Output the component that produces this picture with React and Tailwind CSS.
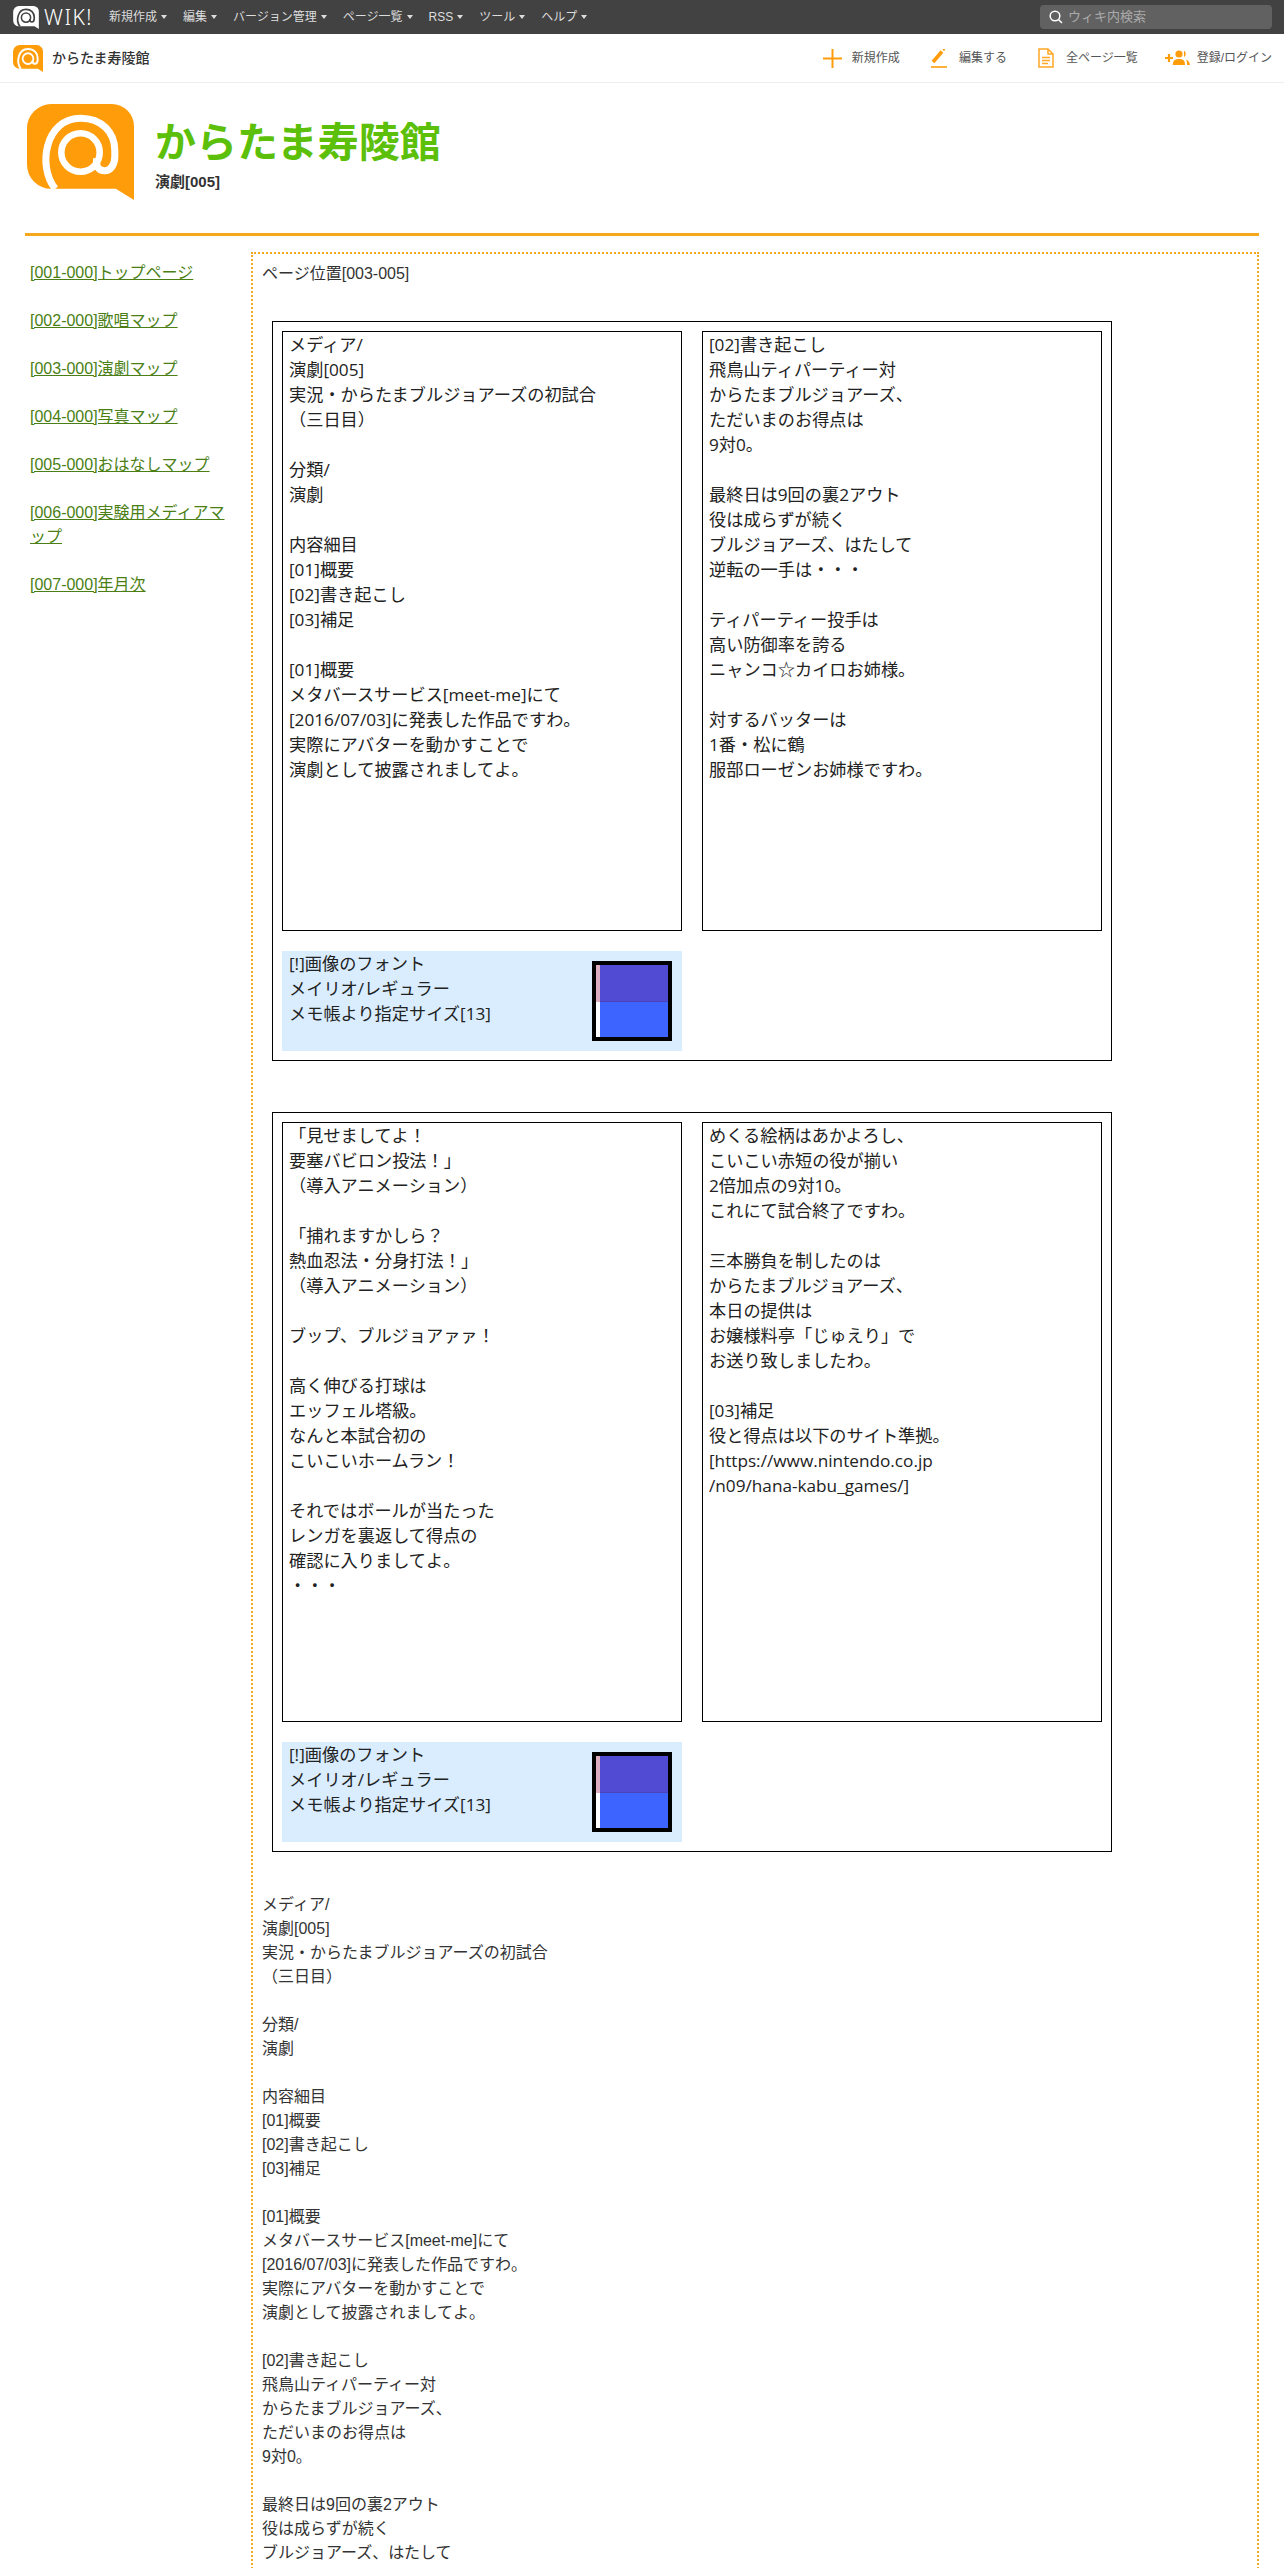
const SANS = { fontFamily: '"Liberation Sans", "Noto Sans CJK JP", sans-serif' }
const PIC = { fontFamily: '"Open Sans", "Noto Sans CJK JP", sans-serif' }

const menu = ['新規作成', '編集', 'バージョン管理', 'ページ一覧', 'RSS', 'ツール', 'ヘルプ']

const sideLinks = [
  '[001-000]トップページ',
  '[002-000]歌唱マップ',
  '[003-000]演劇マップ',
  '[004-000]写真マップ',
  '[005-000]おはなしマップ',
  '[006-000]実験用メディアマップ',
  '[007-000]年月次',
]

const col1 = [
  'メディア/', '演劇[005]', '実況・からたまブルジョアーズの初試合', '（三日目）', '',
  '分類/', '演劇', '',
  '内容細目', '[01]概要', '[02]書き起こし', '[03]補足', '',
  '[01]概要', 'メタバースサービス[meet-me]にて', '[2016/07/03]に発表した作品ですわ。', '実際にアバターを動かすことで', '演劇として披露されましてよ。',
]
const col2 = [
  '[02]書き起こし', '飛鳥山ティパーティー対', 'からたまブルジョアーズ、', 'ただいまのお得点は', '9対0。', '',
  '最終日は9回の裏2アウト', '役は成らずが続く', 'ブルジョアーズ、はたして', '逆転の一手は・・・', '',
  'ティパーティー投手は', '高い防御率を誇る', 'ニャンコ☆カイロお姉様。', '',
  '対するバッターは', '1番・松に鶴', '服部ローゼンお姉様ですわ。',
]
const col3 = [
  '「見せましてよ！', '要塞バビロン投法！」', '（導入アニメーション）', '',
  '「捕れますかしら？', '熱血忍法・分身打法！」', '（導入アニメーション）', '',
  'ブップ、ブルジョアァァ！', '',
  '高く伸びる打球は', 'エッフェル塔級。', 'なんと本試合初の', 'こいこいホームラン！', '',
  'それではボールが当たった', 'レンガを裏返して得点の', '確認に入りましてよ。', '・・・',
]
const col4 = [
  'めくる絵柄はあかよろし、', 'こいこい赤短の役が揃い', '2倍加点の9対10。', 'これにて試合終了ですわ。', '',
  '三本勝負を制したのは', 'からたまブルジョアーズ、', '本日の提供は', 'お嬢様料亭「じゅえり」で', 'お送り致しましたわ。', '',
  '[03]補足', '役と得点は以下のサイト準拠。', '[https://www.nintendo.co.jp', '/n09/hana-kabu_games/]',
]

function Bubble({ className, fill, stroke }) {
  return (
    <svg viewBox="0 0 106 95" className={className}>
      <path d="M24 0H84A22 22 0 0 1 106 22V95L88 84H24A24 24 0 0 1 0 60V24A24 24 0 0 1 24 0Z" fill={fill} />
      <path
        d="M28 84C10 62 18 14 53 14C74 14 87 28 87 46V52C87 60 83 66 77 66C71 66 68 62 69 54"
        fill="none"
        stroke={stroke}
        strokeWidth="7"
      />
      <circle cx="53" cy="48" r="19" fill="none" stroke={stroke} strokeWidth="6.5" />
    </svg>
  )
}

function Lines({ lines }) {
  return lines.map((line, i) => <div key={i}>{line || '\u00a0'}</div>)
}

function PicBox({ lines }) {
  return (
    <div className="h-[600px] border border-black pl-[6px] text-[17.2px] leading-[25px] text-[#222]">
      <Lines lines={lines} />
    </div>
  )
}

function FontNote() {
  return (
    <div className="flex h-[100px] items-center justify-between bg-[#d9edff] pl-[7px] pr-[10px] text-[17.2px] leading-[25px] text-[#222]">
      <div className="self-start">
        <div>[!]画像のフォント</div>
        <div>メイリオ/レギュラー</div>
        <div>メモ帳より指定サイズ[13]</div>
      </div>
      <div className="flex h-20 w-20 border-4 border-black">
        <div className="w-1">
          <div className="h-[37px] bg-[#dcaec0]" />
          <div className="h-[35px] bg-white" />
        </div>
        <div className="flex-1">
          <div className="h-[37px] border-b border-[#4a44b8] bg-[#514bd4]" />
          <div className="h-[35px] bg-[#3e64ff]" />
        </div>
      </div>
    </div>
  )
}

function Picture({ left, right }) {
  return (
    <div className="ml-[10px] w-[840px] border border-black p-[9px]" style={PIC}>
      <div className="grid grid-cols-2 gap-x-5 gap-y-5">
        <PicBox lines={left} />
        <PicBox lines={right} />
        <FontNote />
      </div>
    </div>
  )
}

function ActionLink({ icon, label, className }) {
  return (
    <a className={`flex items-center ${className}`}>
      {icon}
      <span>{label}</span>
    </a>
  )
}

export default function App() {
  return (
    <div className="h-[2568px] overflow-hidden bg-white text-[#333]" style={SANS}>
      {/* top bar */}
      <div className="flex h-[34px] items-center justify-between bg-[#424242] pl-[13px] pr-3">
        <div className="flex items-center">
          <Bubble className="h-[23px] w-[26px]" fill="#fff" stroke="#424242" />
          <span
            className="ml-[5px] w-[52px] text-[21px] leading-[34px] font-light tracking-[1.5px] text-white"
            style={{ fontFamily: '"Noto Sans", sans-serif' }}
          >
            WIK!
          </span>
          <div className="ml-[13px] flex gap-4 text-xs text-[#ddd]">
            {menu.map((m) => (
              <span key={m} className="flex items-center">
                {m}
                <span className="ml-1 h-0 w-0 border-x-[3px] border-t-[4px] border-x-transparent border-t-[#ddd]" />
              </span>
            ))}
          </div>
        </div>
        <div className="flex h-6 w-[232px] items-center rounded-sm bg-[#616161] pl-[9px]">
          <svg viewBox="0 0 14 14" className="h-[14px] w-[14px]" fill="none" stroke="#fff" strokeWidth="1.5">
            <circle cx="6" cy="6" r="4.8" />
            <path d="M9.5 9.5L13 13" />
          </svg>
          <span className="ml-[5px] text-[13px] text-[#aaa]">ウィキ内検索</span>
        </div>
      </div>

      {/* wiki bar */}
      <div className="flex h-[49px] items-center justify-between border-b border-[#eee] pl-[13px] pr-3 text-xs text-[#555]">
        <div className="flex items-center">
          <Bubble className="h-[27px] w-[30px]" fill="#ff9c0a" stroke="#fff" />
          <span className="ml-[9px] text-sm font-medium text-[#333]">からたま寿陵館</span>
        </div>
        <div className="flex items-center">
          <ActionLink
            label="新規作成"
            className="mr-[31px]"
            icon={
              <svg viewBox="0 0 19 19" className="mr-[10px] h-[19px] w-[19px]" stroke="#ff9c0a" strokeWidth="2">
                <path d="M0 9.5H19M9.5 0V19" />
              </svg>
            }
          />
          <ActionLink
            label="編集する"
            className="mr-[31px]"
            icon={
              <svg viewBox="0 0 16 19" className="mr-3 h-[19px] w-4" fill="none" stroke="#ff9c0a">
                <path d="M2 13L11 2.5" strokeWidth="3.6" />
                <path d="M12.2 1.2L13.6 0" strokeWidth="2" />
                <path d="M0 18H16" strokeWidth="1.6" />
              </svg>
            }
          />
          <ActionLink
            label="全ページ一覧"
            className="mr-[27px]"
            icon={
              <svg viewBox="0 0 16 20" className="mr-3 h-5 w-4" fill="none" stroke="#ffa726" strokeWidth="1.5">
                <path d="M1 1H10L15 6V19H1Z" />
                <path d="M10 1V6H15M4 9.5H12M4 12.5H12M4 15.5H10" />
              </svg>
            }
          />
          <ActionLink
            label="登録/ログイン"
            icon={
              <svg viewBox="0 0 25 16" className="mr-[7px] h-4 w-[25px]" fill="#ff9c0a">
                <path d="M0 8H8M4 4V12" stroke="#ff9c0a" strokeWidth="2.2" />
                <circle cx="14" cy="4" r="3.6" />
                <path d="M7.8 15C7.8 10.5 10 9 14 9S20 10.5 20 15Z" />
                <path d="M19 0.8C21 1.6 21.4 5.6 19.4 7.2C18.8 5 19 3 19 0.8ZM21 9.5C23 10 24.6 12 25 15H22C22 13 22 11 21 9.5Z" />
              </svg>
            }
          />
        </div>
      </div>

      {/* site title */}
      <div className="flex h-[150px] items-start">
        <Bubble className="ml-[27px] mt-[21px] h-[96px] w-[107px]" fill="#ff9c0a" stroke="#fff" />
        <div className="ml-[21px] mt-[36px]">
          <div className="text-[41px] leading-[48px] font-bold text-[#5cc00a]">からたま寿陵館</div>
          <div className="mt-[5px] text-[15px] leading-5 font-bold text-[#333]">演劇[005]</div>
        </div>
      </div>
      <div className="ml-[25px] h-[3px] w-[1234px] bg-[#f5a81c]" />

      {/* body */}
      <div className="ml-[25px] flex w-[1234px] items-start">
        <div className="w-[226px] pl-[5px] pr-4 pt-[25px]">
          {sideLinks.map((l) => (
            <a key={l} className="mb-6 block text-base leading-6 text-[#4b7f15] underline">
              {l}
            </a>
          ))}
        </div>
        <div className="mt-4 min-h-[2340px] flex-1 border-2 border-dotted border-[#f5a81c] px-[9px] pt-2 text-base leading-6">
          <p>ページ位置[003-005]</p>
          <div className="mt-[35px]">
            <Picture left={col1} right={col2} />
          </div>
          <div className="mt-[51px]">
            <Picture left={col3} right={col4} />
          </div>
          <div className="mt-[41px]">
            <Lines lines={[...col1, '', ...col2.slice(0, 9)]} />
          </div>
        </div>
      </div>
    </div>
  )
}
